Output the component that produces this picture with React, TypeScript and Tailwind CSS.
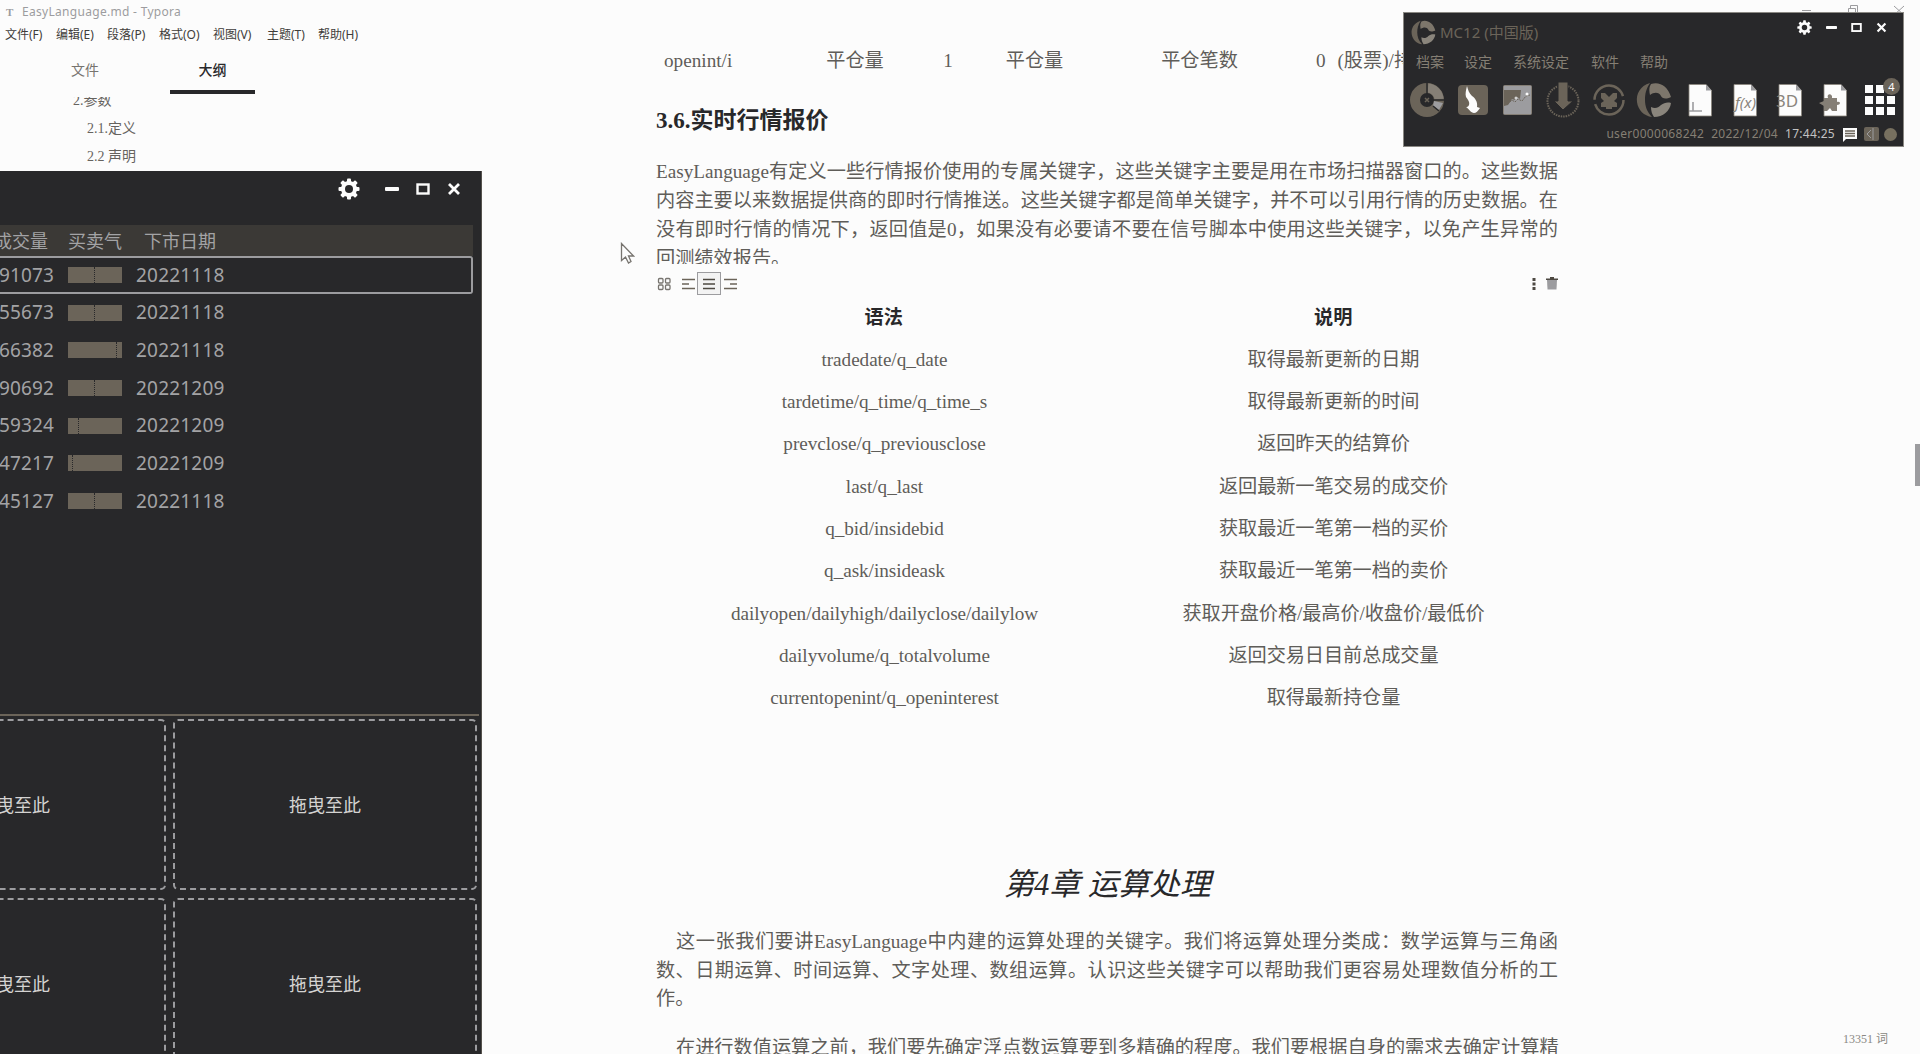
import React from "react";

const SANS = "font-['Noto_Sans','Noto_Sans_CJK_SC',sans-serif]";
const SERIF = "font-['Liberation_Serif','Noto_Sans_CJK_SC',serif]";

const menu = [
  ["文件(F)", "w-[51px]"],
  ["编辑(E)", "w-[51px]"],
  ["段落(P)", "w-[52px]"],
  ["格式(O)", "w-[54px]"],
  ["视图(V)", "w-[54px]"],
  ["主题(T)", "w-[51px]"],
  ["帮助(H)", "w-[51px]"],
];

const syntax = [
  ["tradedate/q_date", "取得最新更新的日期"],
  ["tardetime/q_time/q_time_s", "取得最新更新的时间"],
  ["prevclose/q_previousclose", "返回昨天的结算价"],
  ["last/q_last", "返回最新一笔交易的成交价"],
  ["q_bid/insidebid", "获取最近一笔第一档的买价"],
  ["q_ask/insideask", "获取最近一笔第一档的卖价"],
  ["dailyopen/dailyhigh/dailyclose/dailylow", "获取开盘价格/最高价/收盘价/最低价"],
  ["dailyvolume/q_totalvolume", "返回交易日目前总成交量"],
  ["currentopenint/q_openinterest", "取得最新持仓量"],
];

const quotes: [string, number, string][] = [
  ["91073", 26, "20221118"],
  ["55673", 26, "20221118"],
  ["66382", 48, "20221118"],
  ["90692", 26, "20221209"],
  ["59324", 10, "20221209"],
  ["47217", 4, "20221209"],
  ["45127", 26, "20221118"],
];

function Gear({ size }: { size: number }) {
  return (
    <svg width={size} height={size} viewBox="0 0 22 22">
      <g fill="#fcfcfc">
        {[0, 45, 90, 135].map((a) => (
          <rect key={a} x="9" y="0.5" width="4" height="21" rx="1" transform={`rotate(${a} 11 11)`} />
        ))}
        <circle cx="11" cy="11" r="8" />
      </g>
      <circle cx="11" cy="11" r="4" fill="#28282a" />
    </svg>
  );
}

function WindowButtons({ small }: { small?: boolean }) {
  const s = small ? 11 : 14;
  return (
    <>
      <svg width={s} height={s} viewBox="0 0 14 14"><rect y="5" width="14" height="4" rx="1" fill="#fcfcfc" /></svg>
      <svg width={s} height={s} viewBox="0 0 14 14"><rect x="1.5" y="2.5" width="11" height="9" fill="none" stroke="#fcfcfc" strokeWidth="2.4" /></svg>
      <svg width={s} height={s} viewBox="0 0 14 14"><path d="M2 2 12 12M12 2 2 12" stroke="#fcfcfc" strokeWidth="2.8" /></svg>
    </>
  );
}

function McLogo({ size }: { size: number }) {
  return (
    <svg width={size} height={size} viewBox="0 0 36 36">
      <path d="M14 1C4 4 0 12 1 20c1 8 7 14 15 15-5-5-7-11-7-17S10 7 14 1Z" fill="#6b6459" />
      <path d="M15 2c8-3 17 2 20 13-6 3-9 1-10-1-2-4-7-4-11-1-1-4-1-8 1-11Z" fill="#7d766b" />
      <path d="M35 21c-1 8-8 14-17 14-2-3-3-6-3-10 4 2 7 1 10-2 3-2 6-3 10-2Z" fill="#8a857c" />
    </svg>
  );
}

function Page({ children }: { children?: React.ReactNode }) {
  return (
    <svg width="32" height="34" viewBox="0 0 32 34" className="overflow-visible">
      <path d="M5 1.500h17l5.500 6V33H5Z" fill="#fcfcfc" stroke="#8a857c" strokeWidth=".8" />
      <path d="M22 1.500v6h5.500Z" fill="#9c9c9f" />
      {children}
    </svg>
  );
}

function TypeLine({ children, last, indent }: { children: string; last?: boolean; indent?: boolean }) {
  return (
    <div
      className={`h-[28.9px] whitespace-nowrap leading-[28.9px] ${last ? "" : "[text-align-last:justify]"} ${indent ? "pl-[20px]" : ""}`}
    >
      {children}
    </div>
  );
}

function EditorSidebar() {
  return (
    <aside className={`w-[482px] shrink-0 ${SANS}`}>
      <div className="flex h-6 items-center pl-[5px] text-[#9c9c9f]">
        <span className="w-[17px] pl-[1px] font-['Liberation_Serif',serif] text-[11px] font-bold">T</span>
        <span className="text-[12px] tracking-[0.3px]">EasyLanguage.md - Typora</span>
      </div>
      <div className="flex h-[21px] items-center pl-[5px] text-[12px] text-[#3f3d3a]">
        {menu.map(([label, w]) => (
          <span key={label} className={`${w} shrink-0 whitespace-nowrap`}>{label}</span>
        ))}
      </div>
      <div className="mt-[3px] flex h-[46px] text-[14px] leading-[44px]">
        <span className="w-[170px] text-center text-[#77746f]">文件</span>
        <span className="w-[85px] border-b-[4px] border-[#28282a] text-center font-medium text-[#28282a]">大纲</span>
      </div>
      <div className={`mt-[3px] h-[74px] overflow-hidden text-[14px] text-[#66635e] ${SERIF}`}>
        <div className="mt-[-10px] h-[27px] pl-[73px] leading-[27px]">2.参数</div>
        <div className="mt-px h-[27px] pl-[87px] leading-[27px]">2.1.定义</div>
        <div className="mt-px h-[27px] pl-[87px] leading-[27px]">2.2 声明</div>
      </div>
    </aside>
  );
}

function Document() {
  return (
    <main className={`ml-[174px] w-[902px] shrink-0 pt-[41px] text-[19.2px] text-[#5f5d59] ${SERIF}`}>
      <div className="flex h-10 items-center whitespace-nowrap">
        <span className="w-[111px] pl-2">openint/i</span>
        <span className="w-[176px] text-center">平仓量</span>
        <span className="w-[10px] text-center">1</span>
        <span className="w-[163px] text-center">平仓量</span>
        <span className="w-[167px] text-center">平仓笔数</span>
        <span className="pl-[33px] [word-spacing:7px]">0 (股票)/持</span>
      </div>
      <h3 className="mt-5 h-10 text-[23px] font-bold leading-10 text-[#28282a]">3.6.实时行情报价</h3>
      <div className="mt-[17px] h-[106px] overflow-hidden">
        <TypeLine>EasyLanguage有定义一些行情报价使用的专属关键字，这些关键字主要是用在市场扫描器窗口的。这些数据</TypeLine>
        <TypeLine>内容主要以来数据提供商的即时行情推送。这些关键字都是简单关键字，并不可以引用行情的历史数据。在</TypeLine>
        <TypeLine>没有即时行情的情况下，返回值是0，如果没有必要请不要在信号脚本中使用这些关键字，以免产生异常的</TypeLine>
        <TypeLine last>回测绩效报告。</TypeLine>
      </div>
      <div className="mt-2 flex h-[23px] items-center">
        <svg width="17" height="16" viewBox="0 0 17 16" fill="none" stroke="#77746f" strokeWidth="1.300">
          <rect x="2.500" y="2.500" width="4.500" height="4.500" rx="1" /><rect x="9.500" y="2.500" width="4.500" height="4.500" rx="1" />
          <rect x="2.500" y="9" width="4.500" height="4.500" rx="1" /><rect x="9.500" y="9" width="4.500" height="4.500" rx="1" />
        </svg>
        <svg className="ml-2" width="16" height="16" viewBox="0 0 16 16" stroke="#6b6459" strokeWidth="1.400"><path d="M1 3.500h13M1 8h7M1 12.500h13" /></svg>
        <span className="flex h-[23px] w-6 items-center justify-center border border-[#9c9c9f] bg-[#f3f3f3]">
          <svg width="14" height="16" viewBox="0 0 14 16" stroke="#4d4942" strokeWidth="1.500"><path d="M1 3.500h12M1 8h12M1 12.500h12" /></svg>
        </span>
        <svg className="ml-[2px]" width="16" height="16" viewBox="0 0 16 16" stroke="#6b6459" strokeWidth="1.400"><path d="M1 3.500h13M7 8h7M1 12.500h13" /></svg>
        <svg className="ml-auto" width="8" height="16" viewBox="0 0 8 16" fill="#4d4942"><rect x="2.500" y="2" width="3" height="3" /><rect x="2.500" y="6.500" width="3" height="3" /><rect x="2.500" y="11" width="3" height="3" /></svg>
        <svg className="ml-[8px]" width="12" height="16" viewBox="0 0 12 16"><path d="M1 4h10l-.5 9.500h-9Z" fill="#9c9c9f" /><path d="M0 3.200h12M4 1.800h4" stroke="#4d4942" strokeWidth="1.500" /></svg>
      </div>
      <div className="mt-[2px] text-center">
        <div className="grid h-[42px] grid-cols-2 items-center pl-[3px] font-bold text-[#28282a]">
          <span>语法</span>
          <span>说明</span>
        </div>
        {syntax.map(([code, text]) => (
          <div key={code} className="grid h-[42.3px] grid-cols-2 items-center pl-[4px]">
            <span className="tracking-[-0.05px]">{code}</span>
            <span className="tracking-[-0.1px]">{text}</span>
          </div>
        ))}
      </div>
      <h1 className="mt-[142px] h-[46px] text-center text-[30.700px] italic leading-[46px] text-[#28282a]">第4章 运算处理</h1>
      <div className="mt-5 h-[87px]">
        <TypeLine indent>这一张我们要讲EasyLanguage中内建的运算处理的关键字。我们将运算处理分类成：数学运算与三角函</TypeLine>
        <TypeLine>数、日期运算、时间运算、文字处理、数组运算。认识这些关键字可以帮助我们更容易处理数值分析的工</TypeLine>
        <TypeLine last>作。</TypeLine>
      </div>
      <div className="mt-[19px]">
        <TypeLine indent>在进行数值运算之前，我们要先确定浮点数运算要到多精确的程度。我们要根据自身的需求去确定计算精</TypeLine>
      </div>
    </main>
  );
}

function EditorEdge() {
  return (
    <div className="flex flex-1 flex-col items-end">
      <div className="flex gap-[34px] pr-[15px] pt-[4px] text-[#9c9c9f]">
        <svg width="12" height="12" viewBox="0 0 12 12" stroke="currentColor"><path d="M1 6.500h9" /></svg>
        <svg width="12" height="12" viewBox="0 0 12 12" fill="none" stroke="currentColor"><path d="M1.500 4.500h7v7h-7zM3.500 4V1.500h7v7H9" /></svg>
        <svg width="12" height="12" viewBox="0 0 12 12" stroke="currentColor"><path d="m1 2 10 9M11 2 1 11" /></svg>
      </div>
      <div className="mt-[428px] h-[42px] w-[5px] bg-[#9c9c9f]" />
      <div className={`mt-[541px] pr-8 text-[12px] leading-6 text-[#8a8883] ${SERIF}`}>13351 词</div>
    </div>
  );
}

function DropBox() {
  return (
    <div className="flex h-[171px] w-[304px] shrink-0 items-center justify-center rounded-[5px] border-2 border-dashed border-[#9c9c9f] pt-[2px] text-[18px] text-[#d4d3d2]">
      拖曳至此
    </div>
  );
}

function QuoteWindow() {
  return (
    <section className={`absolute left-0 top-[171px] h-[883px] w-[482px] overflow-hidden border-r border-[#55524d] bg-[#28282a] text-[#a3a3a5] ${SANS}`}>
      <div className="flex h-[54px] items-start pl-[338px] pt-[7px]">
        <Gear size={22} />
        <div className="ml-[25px] mt-1 flex gap-[17px]"><WindowButtons /></div>
      </div>
      <div className="mr-[8px] flex h-[31px] items-center bg-[#3b3936] pt-px text-[18px]">
        <span className="ml-[-6px] w-[74px]">成交量</span>
        <span className="w-[76px]">买卖气</span>
        <span>下市日期</span>
      </div>
      {quotes.map(([volume, split, expiry], i) => (
        <div
          key={volume}
          className={`mr-[8px] flex h-[37.7px] items-center text-[19px] ${i === 0 ? "rounded-r-[3px] border-y-2 border-r-2 border-[#9c9c9f]" : ""}`}
        >
          <span className="ml-[-1px] w-[69px] tracking-[0.15px]">{volume}</span>
          <span className="flex h-4 w-[54px] bg-[#6b6459]">
            <span className="h-full border-r border-dotted border-[#28282a]" style={{ width: split + 1 }} />
          </span>
          <span className="ml-[14px] tracking-[0.2px]">{expiry}</span>
        </div>
      ))}
      <div className="mr-[2px] mt-[194.1px] h-[2px] bg-[#6b6459]" />
      <div className="ml-[-138px] mt-[3px] flex flex-col gap-[8px]">
        <div className="flex gap-[7px]"><DropBox /><DropBox /></div>
        <div className="flex gap-[7px]"><DropBox /><DropBox /></div>
      </div>
    </section>
  );
}

function McWindow() {
  return (
    <section className={`absolute left-[1403px] top-3 flex h-[135px] w-[501px] flex-col border border-[#8a8883] bg-[#28282a] text-[#6b6459] ${SANS}`}>
      <div className="flex h-[38px] items-center pl-[7px]">
        <McLogo size={25} />
        <span className="ml-[4px] text-[15px]">MC12 (中国版)</span>
        <div className="ml-auto flex items-center gap-[14px] pb-[10px] pr-[16px]">
          <Gear size={15} />
          <WindowButtons small />
        </div>
      </div>
      <div className="flex h-[21px] items-center whitespace-nowrap pl-3 text-[14px] text-[#857f74]">
        <span className="w-12">档案</span>
        <span className="w-[49px]">设定</span>
        <span className="w-[78px]">系统设定</span>
        <span className="w-[49px]">软件</span>
        <span>帮助</span>
      </div>
      <div className="mt-[10px] flex h-9 items-center pl-[5px]">
        <svg className="mr-[13px]" width="36" height="36" viewBox="0 0 36 36">
          <circle cx="18" cy="18" r="12" fill="none" stroke="#6b6459" strokeWidth="10" />
          <path d="M19 6a12 12 0 0 1 11 11" fill="none" stroke="#857f76" strokeWidth="9" />
          <path d="M25 19l9 2-4 7-6-4Z" fill="#9c9c9f" />
          <path d="M18 1v12M24 18h11M24 24l6 5" stroke="#28282a" strokeWidth="1.500" />
          <path d="m16 16 4 4m0-4-4 4" stroke="#6b6459" strokeWidth="1.500" />
        </svg>
        <svg className="mr-[15px]" width="30" height="30" viewBox="0 0 30 30">
          <rect width="30" height="30" rx="4" fill="#6b6459" />
          <path d="M9 1c-1 4-2 8-1 11 2 3 4 5 3 8-1 2-2 2-3 2 3 2 5 6 8 6 2 0 4-2 6-5l-3-1c1-5-2-9-5-11-3-3-4-6-5-10Z" fill="#fcfcfc" />
        </svg>
        <svg className="mr-[14px]" width="29" height="30" viewBox="0 0 29 30">
          <rect x=".5" y=".5" width="28" height="29" rx="1" fill="#9c9c9f" stroke="#857f76" />
          <path d="M1 5h17l-1 9-3-2-2 3-3-1-4 6-4 1Z" fill="#6b6459" />
          <path d="m5 19 4-4 3 2 3-3 4 2 4-5 4-1" stroke="#6b6459" fill="none" strokeDasharray="2 1" />
          <circle cx="13" cy="13" r="1.500" fill="#d4d3d2" /><circle cx="24" cy="9" r="1.500" fill="#fcfcfc" />
        </svg>
        <svg className="mr-[12px]" width="34" height="36" viewBox="0 0 34 36">
          <circle cx="17" cy="19" r="15.500" fill="none" stroke="#6b6459" strokeWidth="2" strokeDasharray="1.500 1" />
          <path d="M12 0h10v19h5l-10 9-9-9h4Z" fill="#6b6459" stroke="#28282a" />
        </svg>
        <svg className="mr-[10px]" width="34" height="36" viewBox="0 0 34 36">
          <circle cx="17" cy="18" r="14.500" fill="none" stroke="#6b6459" strokeWidth="2.500" strokeDasharray="41 4.550" />
          <path d="M9 11h4l4 4 4-4h4v5l-3 3 3 2v4h-5v2h-6v-2H9v-4l3-2-3-3Z" fill="#6b6459" />
        </svg>
        <span className="mr-[12px]"><McLogo size={36} /></span>
        <span className="mr-[13px]"><Page><path d="M9 19v9M5 28h13" stroke="#9c9c9f" strokeWidth="1.600" /></Page></span>
        <span className="mr-[13px]"><Page><text x="6" y="25" fontSize="15" fontStyle="italic" fill="#8a857c" textLength="21">f(x)</text></Page></span>
        <span className="mr-[13px]"><Page><text x="2" y="24" fontSize="17" fill="#8a857c">3D</text></Page></span>
        <span className="mr-[14px]"><Page><path d="M0 20l5-2v-3h4c-2-5 5-5 4 0h5v4c4-1 4 3 0 3v6h-5l-2-3-3 3H5v-5Z" fill="#857f76" /></Page></span>
        <div className="relative">
          <div className="grid grid-cols-3 gap-[3px]">
            {Array.from({ length: 9 }, (_, i) => (
              <span key={i} className="size-[8px] bg-[#fcfcfc]" />
            ))}
          </div>
          <span className="absolute -right-[5px] -top-[7px] flex size-[17px] items-center justify-center rounded-full bg-[#6b6459] text-[11px] leading-none text-[#fcfcfc]">4</span>
        </div>
      </div>
      <div className="mt-[6px] flex h-[20px] items-center justify-end pr-[6px] text-[12px]">
        <span className="mr-[7px] tracking-[0.3px] text-[#857f74]">user0000068242</span>
        <span className="tracking-[0.3px] text-[#857f74]">2022/12/04</span>
        <span className="ml-[7px] tracking-[0.3px] text-[#c2c2c2]">17:44:25</span>
        <svg className="ml-[7px]" width="16" height="15" viewBox="0 0 16 15">
          <path d="M1 1h14v11H4l-3 3Z" fill="#fcfcfc" /><path d="M3 4h10M3 6.500h10M3 9h10" stroke="#6b6459" strokeWidth="1.300" />
        </svg>
        <svg className="ml-[6px]" width="15" height="14" viewBox="0 0 15 14">
          <rect width="15" height="14" rx="2" fill="#6b6459" /><path d="M7 3 3 7l4 4M9 1v12" fill="none" stroke="#9c9c9f" />
        </svg>
        <svg className="ml-[5px]" width="13" height="13" viewBox="0 0 13 13"><circle cx="6.500" cy="6.500" r="6.500" fill="#77705f" /></svg>
      </div>
    </section>
  );
}

export default function App() {
  return (
    <div className="relative h-[1054px] w-[1920px] overflow-hidden bg-[#fcfcfc]">
      <div className="flex h-full">
        <EditorSidebar />
        <Document />
        <EditorEdge />
      </div>
      <QuoteWindow />
      <McWindow />
      <svg className="absolute left-[620px] top-[242px]" width="15" height="22" viewBox="0 0 15 22">
        <path d="M1.500 1.500v17l4-3.500 3 6 2.500-1.500-2.500-5.500h5Z" fill="#fcfcfc" stroke="#77746f" strokeWidth="1.300" />
      </svg>
    </div>
  );
}
